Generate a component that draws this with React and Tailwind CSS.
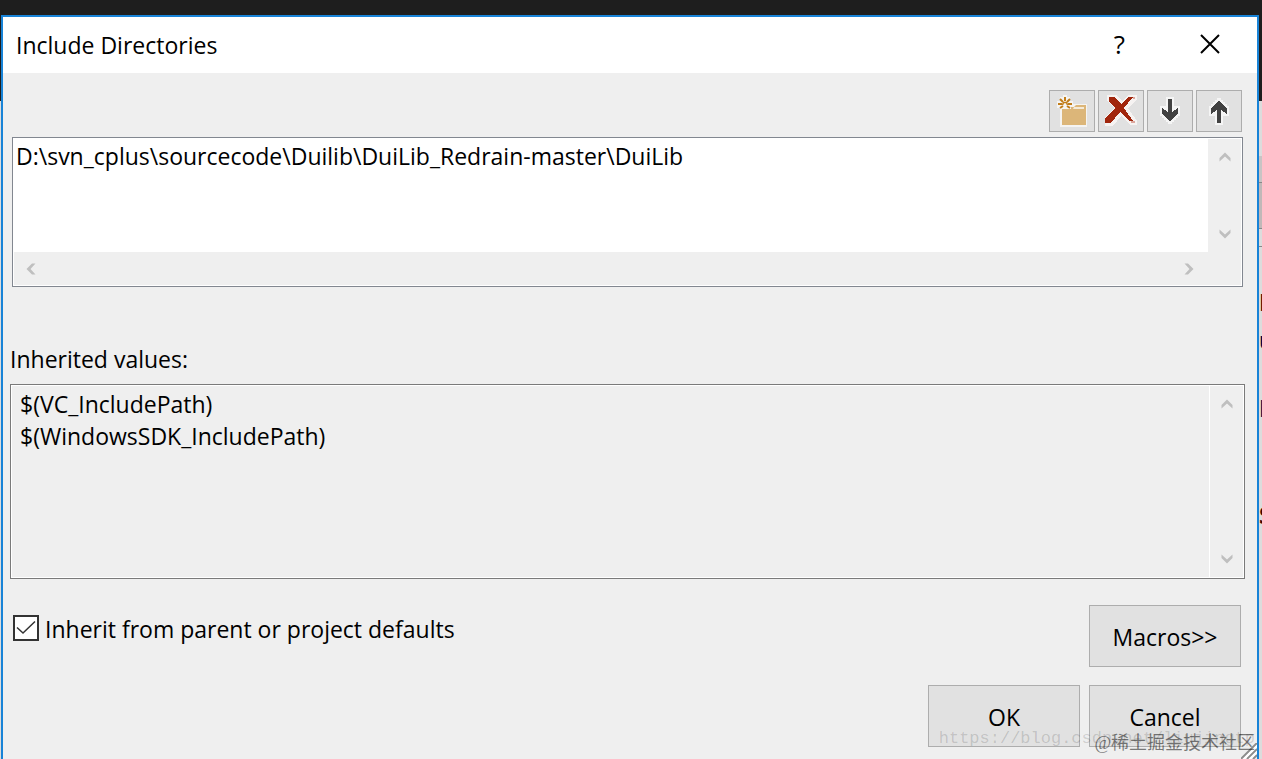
import React, { useState } from "react";

const Chevron = ({ className = "" }) => (
  <svg className={`w-3 h-3 ${className}`} viewBox="0 0 12 12" fill="#bfbfbf">
    <path d="M6 1.500l5.500 5.500v3.500L6 5.500.5 10.500V7z" />
  </svg>
);

const NewLineIcon = () => (
  <svg width="32" height="32" viewBox="0 0 32 32">
    <path d="M1 6h3V2h3V0h4v2h3v4h3v3h14v23H4V13H1z" fill="#f5f4f2" />
    <path d="M6 14h9v-2h3l2-2h10v20H6z" fill="#dcb679" />
    <path d="M17 14h11v-2H18z" fill="#f4ead8" />
    <g fill="none" stroke="#c27d1a" strokeWidth={2}>
      <path d="M2 9h4M12 9h4M9 2v4M4 4l3 3M14 4l-3 3M4 13l3-2M14 13l-3-2" />
      <path d="M6.500 10l1-2.500h3l1 2.500" strokeWidth={1.500} />
    </g>
  </svg>
);

const DeleteIcon = () => (
  <svg width="32" height="32" viewBox="0 0 32 32" shapeRendering="crispEdges">
    <path d="M2 0h10l5 6 7-6h8v4l-9 9 9 13v4h-6l-10-9-8 10H0v-8l9-10-7-7z" fill="#f6f3f2" />
    <path d="M4 2h6l6 7 8-7h4L19 13l9 13h-3L15 17 6 28H0v-4l10-11-6-7z" fill="#a1260d" />
    <path d="M28 2h2v2h-2zM26 26h4v2h-4z" fill="#dba79d" />
  </svg>
);

const ArrowIcon = ({ className = "" }) => (
  <svg width="32" height="32" viewBox="0 0 32 32" className={className} shapeRendering="crispEdges">
    <path d="M12 2h8v9h6v10h-2v2h-2v2h-2v2h-2v2h-4v-2h-2v-2h-2v-2H8v-2H6V11h6z" fill="#f5f5f5" />
    <path d="M14 4h4v13l6-4v6l-8 7-8-7v-6l6 4z" fill="#424242" />
  </svg>
);

const ToolButton = ({ label, children }) => (
  <button
    type="button"
    aria-label={label}
    className="flex items-center justify-center w-[46px] h-[42px] bg-[#e1e1e1] border border-[#adadad]"
  >
    {children}
  </button>
);

const DialogButton = ({ children }) => (
  <button type="button" className="w-[152px] h-[62px] pt-0.5 bg-[#e1e1e1] border border-[#adadad]">
    {children}
  </button>
);

const App = () => {
  const [paths, setPaths] = useState("D:\\svn_cplus\\sourcecode\\Duilib\\DuiLib_Redrain-master\\DuiLib");
  const [inherit, setInherit] = useState(true);

  return (
    <div className="min-h-screen flex flex-col bg-[#dcdcdc] text-[23px] leading-8 text-black font-['Open_Sans','Noto_Sans',sans-serif]">
      <div className="h-[15px] bg-[#1e1e1e]" />
      <div className="flex flex-1">
        <div className="w-px">
          <div className="h-[86px] bg-[#1e1e1e]" />
        </div>

        <div role="dialog" aria-labelledby="title" className="relative flex-1 min-w-0 flex flex-col bg-[#efefef] border-2 border-b-0 border-[#1883d7]">
          <header className="flex items-center justify-between h-14 pl-[13px] pr-[37px] bg-white">
            <h1 id="title">Include Directories</h1>
            <div className="flex items-center gap-[75px]">
              <button type="button" aria-label="Help" className="pb-0.5 text-[26px]">?</button>
              <button type="button" aria-label="Close" className="pb-0.5">
                <svg className="w-5 h-5" viewBox="0 0 20 20" fill="none" stroke="#000" strokeWidth={2}>
                  <path d="M1 1l18 18M19 1L1 19" />
                </svg>
              </button>
            </div>
          </header>

          <div className="flex justify-end gap-[3px] pt-[17px] pr-[15px]">
            <ToolButton label="New line"><NewLineIcon /></ToolButton>
            <ToolButton label="Delete"><DeleteIcon /></ToolButton>
            <ToolButton label="Move down"><ArrowIcon /></ToolButton>
            <ToolButton label="Move up"><ArrowIcon className="rotate-180" /></ToolButton>
          </div>

          <div className="mt-[5px] ml-[9px] mr-[14px] bg-white border border-[#828790] p-px">
            <div className="flex">
              <textarea
                aria-label="Include directories"
                wrap="off"
                value={paths}
                onChange={(e) => setPaths(e.target.value)}
                className="block flex-1 min-w-0 h-[113px] pl-0.5 pt-px resize-none overflow-hidden outline-none"
              />
              <div className="flex flex-col justify-between items-center w-[33px] py-3 bg-[#efefef]">
                <Chevron />
                <Chevron className="rotate-180" />
              </div>
            </div>
            <div className="flex justify-between items-center h-[33px] pl-[11px] pr-[46px] bg-[#efefef]">
              <Chevron className="-rotate-90" />
              <Chevron className="rotate-90" />
            </div>
          </div>

          <label htmlFor="inherited" className="mt-14 ml-[7px]">Inherited values:</label>
          <div className="flex mt-[9px] ml-[7px] mr-3 border border-[#7a7a7a] outline outline-1 -outline-offset-2 outline-white p-px">
            <textarea
              id="inherited"
              readOnly
              value={"$(VC_IncludePath)\n$(WindowsSDK_IncludePath)"}
              className="block flex-1 min-w-0 h-[191px] pl-2 pt-0.5 resize-none overflow-hidden outline-none"
            />
            <div className="flex flex-col justify-between items-center w-[34px] py-3 border-l border-white">
              <Chevron />
              <Chevron className="rotate-180" />
            </div>
          </div>

          <div className="flex justify-between items-start mt-[26px] ml-[10px] mr-4">
            <label className="flex items-start gap-[6px] pt-2">
              <span className="relative flex mt-0.5">
                <input
                  type="checkbox"
                  checked={inherit}
                  onChange={(e) => setInherit(e.target.checked)}
                  className="appearance-none w-[26px] h-[26px] bg-white border-2 border-[#333]"
                />
                {inherit && (
                  <svg className="absolute inset-0 pointer-events-none" viewBox="0 0 26 26" fill="none" stroke="#333" strokeWidth={1.500}>
                    <path d="M4 12.500l6 5.500L22 6.500" />
                  </svg>
                )}
              </span>
              Inherit from parent or project defaults
            </label>
            <DialogButton>Macros&gt;&gt;</DialogButton>
          </div>

          <div className="flex justify-end gap-[9px] mt-[18px] mr-4 pb-3">
            <DialogButton>OK</DialogButton>
            <DialogButton>Cancel</DialogButton>
          </div>

          <svg className="absolute right-0 bottom-0 w-4 h-4" viewBox="0 0 16 16" stroke="#8c8c8c" strokeWidth={2}>
            <path d="M0 16L16 0M6 16L16 6M12 16L16 12" />
            <path d="M2 17L17 2M8 17L17 8" stroke="#fff" />
          </svg>
          <div className="absolute right-[2px] bottom-[8px] text-[17px] leading-6 whitespace-nowrap text-black/15 pointer-events-none font-['Liberation_Mono',monospace]">
            https://blog.csdn.net/liujingtp
          </div>
          <div className="absolute right-[2px] bottom-[4px] text-lg leading-6 whitespace-nowrap text-black/50 pointer-events-none font-['Liberation_Serif','Noto_Sans_CJK_SC',serif]">
            @稀土掘金技术社区
          </div>
        </div>

        {/* sliver of the window behind the dialog */}
        <div className="w-[3px] overflow-hidden font-bold text-[#000040]">
          <div className="h-[86px] bg-[#1e1e1e]" />
          <div className="h-[55px]" />
          <div className="h-[26px] bg-[#c8c4c4]" />
          <div className="h-[47px] bg-[#c0b8b8] border-y border-[#888]" />
          <div className="h-[18px] border-b border-[#888]" />
          <div className="mt-[39px] text-[#400000]">I</div>
          <div className="mt-[6px]">u</div>
          <div className="mt-9">P</div>
          <div className="mt-[75px] text-[#400000]">S</div>
        </div>
      </div>
    </div>
  );
};

export default App;
